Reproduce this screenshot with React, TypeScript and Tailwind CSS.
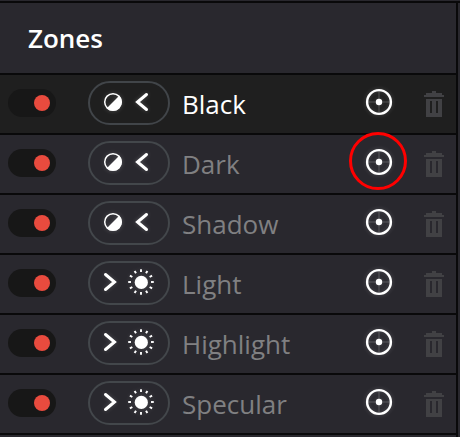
type Zone = { name: string; side: "low" | "high"; active?: boolean; marked?: boolean };

const zones: Zone[] = [
  { name: "Black", side: "low", active: true },
  { name: "Dark", side: "low", marked: true },
  { name: "Shadow", side: "low" },
  { name: "Light", side: "high" },
  { name: "Highlight", side: "high" },
  { name: "Specular", side: "high" },
];

const rayAngles = [0, 30, 60, 90, 120, 150, 180, 210, 240, 270, 300, 330];

function Toggle() {
  return (
    <div className="flex h-7 w-12 shrink-0 items-center justify-end rounded-full bg-[#171717] pr-1.5">
      <div className="size-4 rounded-full bg-[#e94b3e]" />
    </div>
  );
}

function LowRange() {
  return (
    <svg width="78" height="40" viewBox="0 0 78 40" fill="none" className="drop-shadow-[0_0_2px_rgba(255,255,255,0.22)]">
      <circle cx="23" cy="19" r="8.3" stroke="#fff" strokeWidth="1.5" />
      <path d="M29.2 12.8A8.7 8.7 0 0 1 16.8 25.2Z" fill="#fff" />
      <path d="M56.5 11.5L47.5 19L56.5 26.5" stroke="#fff" strokeWidth="3" strokeLinecap="round" />
    </svg>
  );
}

function HighRange() {
  return (
    <svg width="78" height="40" viewBox="0 0 78 40" fill="none" className="drop-shadow-[0_0_2px_rgba(255,255,255,0.18)]">
      <path d="M15.5 11.5L24.5 19L15.5 26.5" stroke="#fff" strokeWidth="3" strokeLinecap="round" />
      <circle cx="51.3" cy="19.4" r="6.6" fill="#fff" />
      {rayAngles.map((a) => (
        <path key={a} d="M51 9V6.2" stroke="#fff" strokeWidth="1.9" transform={`rotate(${a} 51 19)`} />
      ))}
    </svg>
  );
}

function Target() {
  return (
    <svg width="30" height="30" viewBox="0 0 30 30" fill="none" className="drop-shadow-[0_0_2px_rgba(255,255,255,0.2)]">
      <path d="M15 4V26M4 15H26" stroke="#fff" strokeOpacity="0.1" strokeWidth="2" />
      <circle cx="15" cy="15" r="11.9" stroke="#fff" strokeWidth="2.4" />
      <circle cx="15" cy="15" r="3.2" fill="#fff" />
    </svg>
  );
}

function Trash() {
  return (
    <svg width="20" height="26" viewBox="0 0 20 26" fill="#414144" shapeRendering="crispEdges">
      <path d="M8 0H12V2H18V4H20V6H0V4H2V2H8Z" />
      <path fillRule="evenodd" d="M2 8H18V26H2ZM6 10V22H8V10ZM12 10V22H14V10Z" />
    </svg>
  );
}

function ZoneRow({ zone }: { zone: Zone }) {
  return (
    <div className={`flex h-[60px] shrink-0 border-b-2 border-[#09090a] pl-2 ${zone.active ? "bg-[#1f1f1f]" : "bg-[#29282e]"}`}>
      <div className="flex pt-3.5">
        <Toggle />
      </div>
      <div className={`mt-1.5 ml-8 h-11 w-[82px] shrink-0 rounded-full border-2 ${zone.active ? "border-[#414549]" : "border-[#43474b]"}`}>
        {zone.side === "low" ? <LowRange /> : <HighRange />}
      </div>
      <div className={`ml-3 w-[182px] pt-[11px] text-[26px] leading-9 ${zone.active ? "text-white" : "text-[#808082]"}`}>
        {zone.name}
      </div>
      <div className="relative mt-3 h-[30px] w-[30px] shrink-0">
        <Target />
        {zone.marked && (
          <div className="absolute -top-[15px] -left-[15px] z-10 size-[58px] rounded-full border-[3px] border-[#ff0000]" />
        )}
      </div>
      <div className="mt-4 ml-[30px]">
        <Trash />
      </div>
    </div>
  );
}

export default function App() {
  return (
    <div className="flex h-[437px] w-[460px] flex-col overflow-hidden bg-[#29282e] font-['Open_Sans','Noto_Sans',sans-serif]">
      <div className="h-[3px] shrink-0 border-b-2 border-[#09090a] bg-[#29282e]" />
      <div className="flex min-h-0 grow">
        <div className="flex w-[458px] shrink-0 flex-col border-r-2 border-[#09090a]">
          <div className="h-[72px] shrink-0 border-b-2 border-[#09090a] pt-[17px] pl-7 text-[26px] leading-9 font-semibold text-white">
            Zones
          </div>
          {zones.map((z) => (
            <ZoneRow key={z.name} zone={z} />
          ))}
        </div>
      </div>
    </div>
  );
}
